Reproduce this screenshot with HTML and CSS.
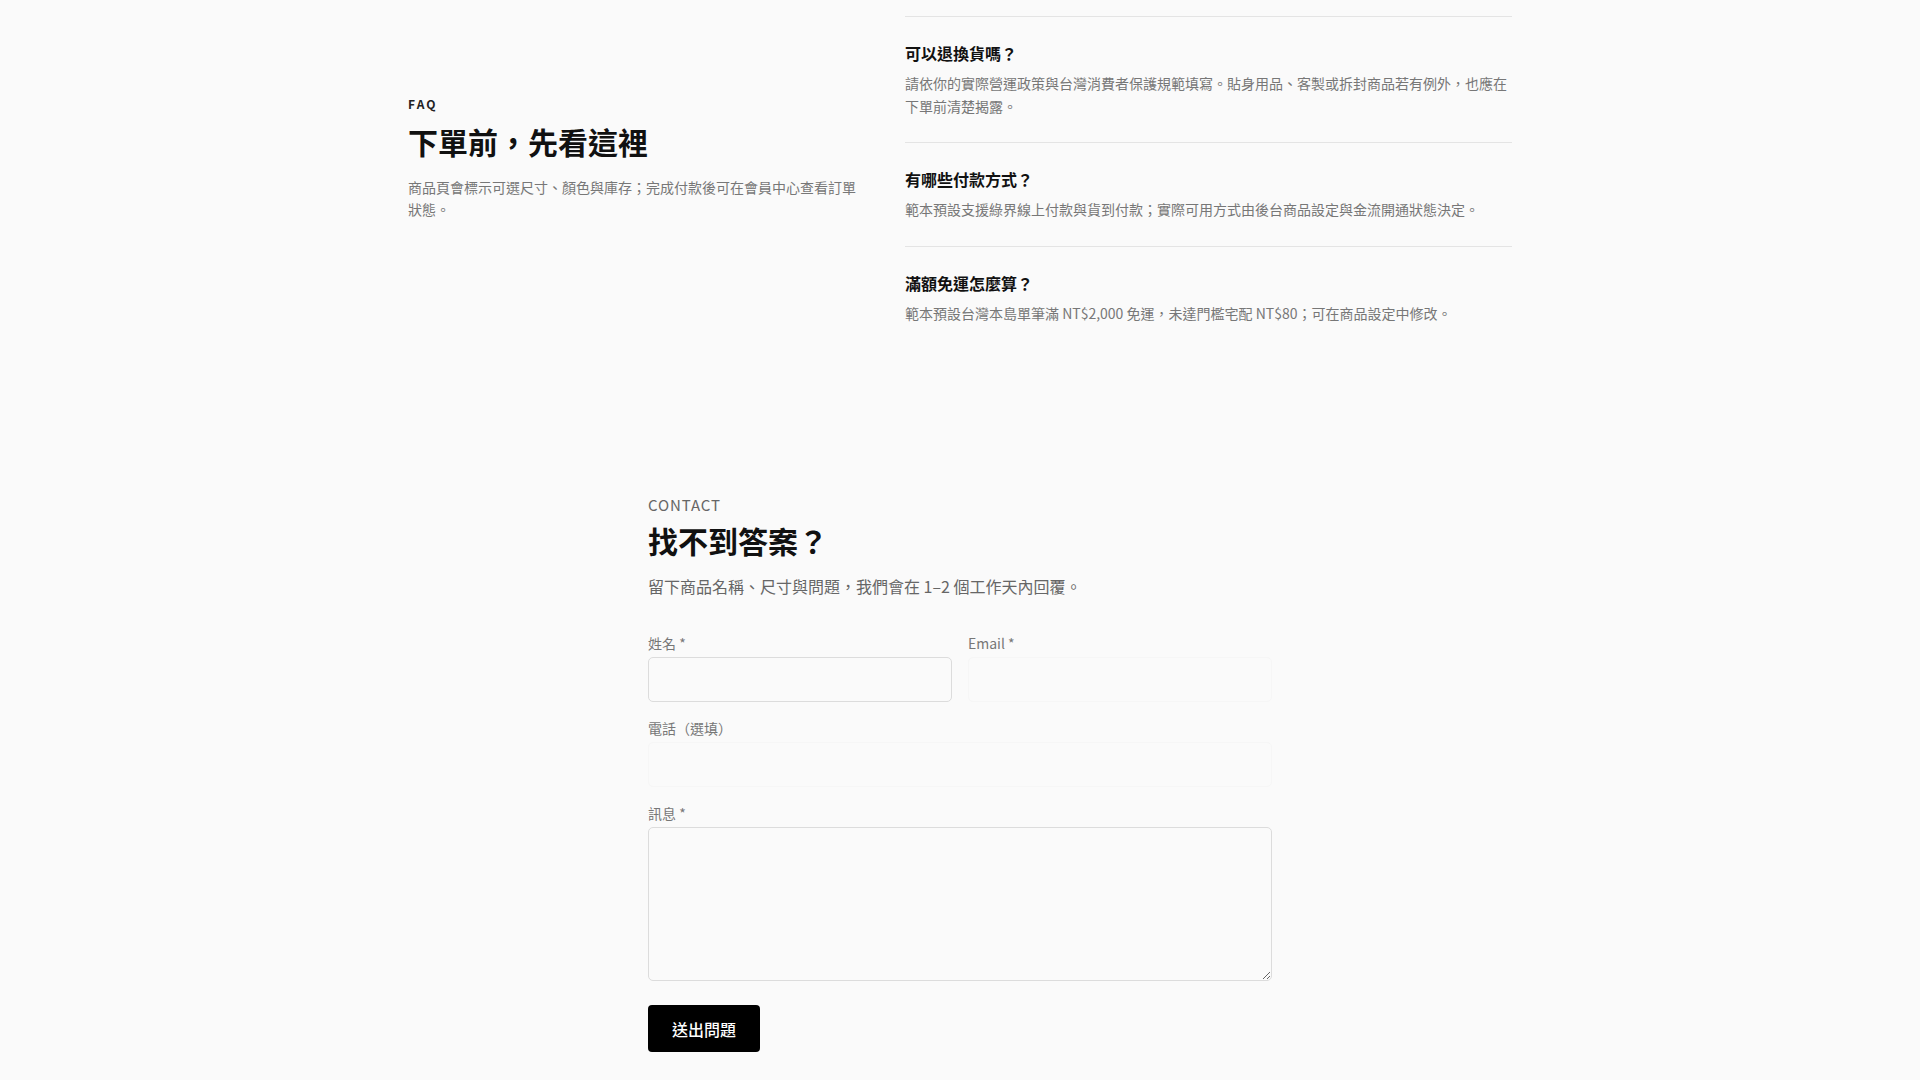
FILE: index.html
```html
<!DOCTYPE html>
<html lang="zh-Hant">
<head>
<meta charset="utf-8">
<title>FAQ 與聯絡</title>
<link rel="stylesheet" href="styles.css">
</head>
<body>
<section class="faq">
  <div class="faq-intro">
    <p class="eyebrow eyebrow-dark">FAQ</p>
    <h2 class="section-title">下單前，先看這裡</h2>
    <p class="intro-text">商品頁會標示可選尺寸、顏色與庫存；完成付款後可在會員中心查看訂單狀態。</p>
  </div>
  <div class="faq-list">
    <div class="faq-item">
      <h3 class="faq-q">可以退換貨嗎？</h3>
      <p class="faq-a">請依你的實際營運政策與台灣消費者保護規範填寫。貼身用品、客製或拆封商品若有例外，也應在下單前清楚揭露。</p>
    </div>
    <div class="faq-item">
      <h3 class="faq-q">有哪些付款方式？</h3>
      <p class="faq-a">範本預設支援綠界線上付款與貨到付款；實際可用方式由後台商品設定與金流開通狀態決定。</p>
    </div>
    <div class="faq-item">
      <h3 class="faq-q">滿額免運怎麼算？</h3>
      <p class="faq-a">範本預設台灣本島單筆滿 NT$2,000 免運，未達門檻宅配 NT$80；可在商品設定中修改。</p>
    </div>
  </div>
</section>

<section class="contact">
  <p class="eyebrow eyebrow-light">CONTACT</p>
  <h2 class="section-title">找不到答案？</h2>
  <p class="contact-text">留下商品名稱、尺寸與問題，我們會在 1–2 個工作天內回覆。</p>
  <form class="contact-form">
    <div class="form-row">
      <label class="field">
        <span class="field-label">姓名 *</span>
        <input class="input" type="text">
      </label>
      <label class="field">
        <span class="field-label">Email *</span>
        <input class="input input-faint" type="email">
      </label>
    </div>
    <label class="field">
      <span class="field-label">電話（選填）</span>
      <input class="input input-faint" type="tel">
    </label>
    <label class="field">
      <span class="field-label">訊息 *</span>
      <textarea class="input textarea"></textarea>
    </label>
    <div class="actions">
      <button class="submit" type="button">送出問題</button>
    </div>
  </form>
</section>
</body>
</html>
```

FILE: styles.css
```css
* {
  box-sizing: border-box;
}

html, body {
  margin: 0;
  padding: 0;
}

body {
  background: #fafafa;
  color: #111;
  font-family: "Noto Sans CJK TC", "Noto Sans", sans-serif;
  min-height: 1080px;
}

p, h2, h3 {
  margin: 0;
}

.faq {
  max-width: 1200px;
  margin: 0 auto;
  padding: 16px 48px 72px;
  display: grid;
  grid-template-columns: 450px 1fr;
  column-gap: 47px;
  align-items: start;
}

.faq-intro {
  padding-top: 79px;
}

.eyebrow {
  line-height: 18px;
}

.eyebrow-dark {
  font-size: 12px;
  font-weight: 700;
  letter-spacing: 0.18em;
  color: #222;
}

.eyebrow-light {
  font-size: 15px;
  font-weight: 400;
  letter-spacing: 0.06em;
  color: #666;
  line-height: 22px;
}

.section-title {
  font-size: 30px;
  font-weight: 700;
  line-height: 39px;
  color: #111;
}

.faq-intro .section-title {
  margin-top: 9px;
}

.intro-text {
  margin-top: 15px;
  font-size: 14px;
  line-height: 22.4px;
  color: #777;
}

.faq-item {
  border-top: 1px solid #e4e4e4;
  padding: 24px 0;
}

.faq-q {
  font-size: 16px;
  font-weight: 700;
  line-height: 24px;
  color: #111;
}

.faq-a {
  margin-top: 7px;
  font-size: 14px;
  line-height: 23.2px;
  color: #777;
}

.contact {
  width: 624px;
  margin: 0 auto;
  padding-top: 73px;
  padding-bottom: 28px;
}

.contact .section-title {
  margin-top: 5px;
}

.contact-text {
  margin-top: 14px;
  font-size: 16px;
  line-height: 25.6px;
  color: #666;
}

.contact-form {
  margin-top: 34px;
  display: flex;
  flex-direction: column;
  gap: 16px;
}

.form-row {
  display: grid;
  grid-template-columns: 1fr 1fr;
  column-gap: 16px;
}

.field {
  display: flex;
  flex-direction: column;
}

.field-label {
  font-size: 14px;
  line-height: 20px;
  color: #777;
  margin-bottom: 4px;
}

.input {
  display: block;
  width: 100%;
  height: 45px;
  border: 1px solid #dcdcdc;
  border-radius: 5px;
  background: #fafafa;
  font-family: inherit;
  font-size: 14px;
  padding: 10px 12px;
  outline: none;
}

.input-faint {
  border-color: #f6f6f6;
}

.textarea {
  height: 154px;
  resize: vertical;
}

.actions {
  padding-top: 8px;
}

.submit {
  height: 47px;
  padding: 0 24px;
  white-space: nowrap;
  border: none;
  border-radius: 4px;
  background: #000;
  color: #fff;
  font-family: inherit;
  font-size: 16px;
  font-weight: 500;
  cursor: pointer;
}
```
